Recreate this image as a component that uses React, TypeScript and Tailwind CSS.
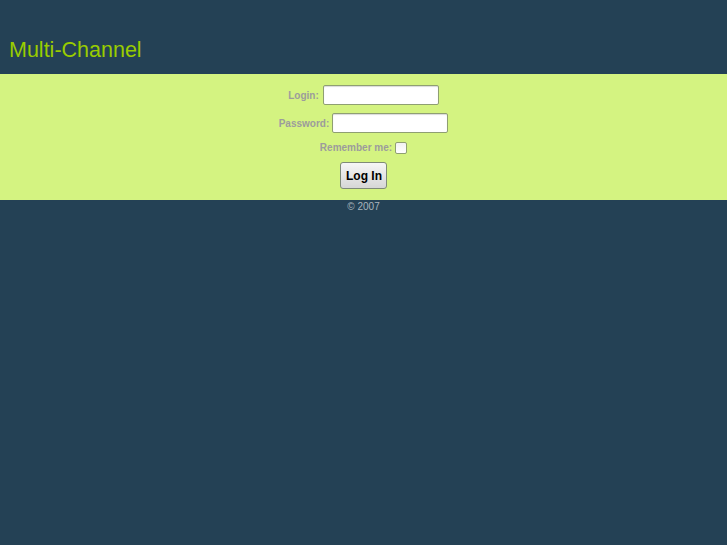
import React from "react";

export default function App() {
  return (
    <div className="min-h-[545px] w-full bg-[#244155] font-['Liberation_Sans',Arial,sans-serif]">
      <div className="h-[74px] flex items-end pb-[13px] pl-[9px]">
        <h1 className="text-[21.5px] leading-none text-[#99cc00] font-normal">Multi-Channel</h1>
      </div>
      <div className="bg-[#d4f381] h-[126px] flex flex-col items-center pt-[11px]">
        <div className="flex items-center h-[20px]">
          <label className="text-[10px] font-bold text-[#9c9c9c] mr-[4px]">Login:</label>
          <input className="w-[116px] h-[20px] bg-white border border-[#8f9f72] rounded-[2px] shadow-[inset_0_1px_1px_rgba(0,0,0,0.15)] outline-none" />
        </div>
        <div className="flex items-center h-[20px] mt-[8px]">
          <label className="text-[10px] font-bold text-[#9c9c9c] mr-[3px]">Password:</label>
          <input type="password" className="w-[116px] h-[20px] bg-white border border-[#8f9f72] rounded-[2px] shadow-[inset_0_1px_1px_rgba(0,0,0,0.15)] outline-none" />
        </div>
        <div className="flex items-center h-[13px] mt-[8px]">
          <label className="text-[10px] font-bold text-[#9c9c9c] mr-[3px]">Remember me:</label>
          <span className="w-[12px] h-[12px] bg-white border border-[#8f9f72] rounded-[2px] bg-gradient-to-b from-[#f2f2f2] to-white"></span>
        </div>
        <button className="mt-[8px] w-[47px] h-[27px] border border-[#7f8a78] rounded-[3px] bg-gradient-to-b from-[#f6f6f6] to-[#d6d6d6] text-[12px] font-bold text-black pl-[1px]">
          Log In
        </button>
      </div>
      <div className="text-center text-[10px] leading-[13px] text-[#a9b4bc] pt-0">© 2007</div>
    </div>
  );
}
